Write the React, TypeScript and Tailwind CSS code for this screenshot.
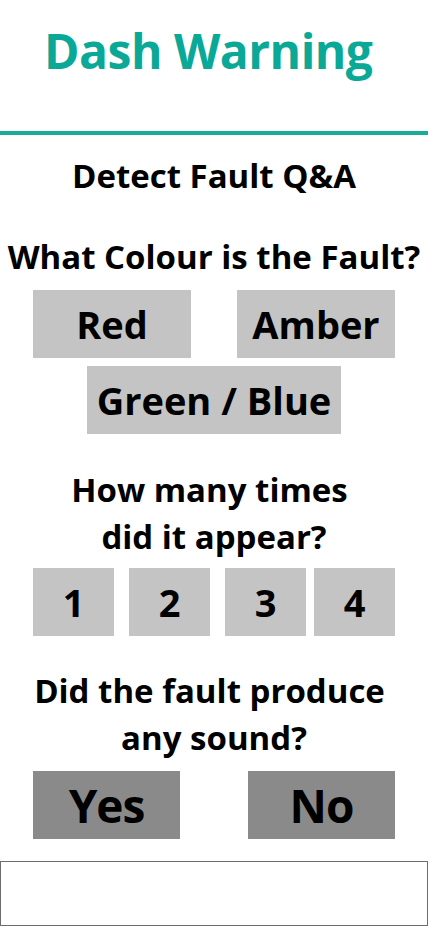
const font = { fontFamily: '"Open Sans", "Noto Sans", sans-serif' };

function Btn({ label, className }: { label: string; className: string }) {
  return (
    <div className={`flex items-center justify-center h-[68px] bg-[#c4c4c4] text-black font-bold text-[38px] leading-none ${className}`}>
      {label}
    </div>
  );
}

function Choice({ label }: { label: string }) {
  return (
    <div className="flex items-center justify-center w-[147px] h-[68px] bg-[#8a8a8a] text-black font-bold text-[46px] leading-none tracking-[-1px]">
      {label}
    </div>
  );
}

export default function App() {
  return (
    <div className="w-[428px] h-[926px] bg-white overflow-hidden" style={font}>
      <div className="h-[131px] pl-[44px] pt-[21px]">
        <h1 className="text-[#0aa896] font-bold text-[48px] leading-[60px] tracking-[-0.5px]">Dash Warning</h1>
      </div>
      <div className="h-[4px] bg-[#1aab99]" />

      <p className="mt-[21px] text-center font-bold text-[33px] leading-[40px]">Detect Fault Q&amp;A</p>
      <p className="mt-[41px] text-center font-bold text-[33px] leading-[40px] whitespace-nowrap">What Colour is the Fault?</p>

      <div className="mt-[13px] flex justify-between px-[33px]">
        <Btn label="Red" className="w-[158px]" />
        <Btn label="Amber" className="w-[158px]" />
      </div>
      <div className="mt-[8px] flex pl-[87px]">
        <Btn label="Green / Blue" className="w-[254px]" />
      </div>

      <div className="mt-[32px] text-center font-bold text-[33px] leading-[47px]">
        <p className="pr-[9px]">How many times</p>
        <p>did it appear?</p>
      </div>

      <div className="mt-[8px] flex pl-[33px] gap-[15px]">
        <Btn label="1" className="w-[81px]" />
        <Btn label="2" className="w-[81px]" />
        <Btn label="3" className="w-[81px]" />
        <Btn label="4" className="w-[81px] -ml-[7px]" />
      </div>

      <div className="mt-[31px] text-center font-bold text-[33px] leading-[47px]">
        <p className="pr-[9px]">Did the fault produce</p>
        <p>any sound?</p>
      </div>

      <div className="mt-[10px] flex justify-between px-[33px]">
        <Choice label="Yes" />
        <Choice label="No" />
      </div>

      <div className="mt-[22px] h-[65px] border border-[#6d6d6d]" />
    </div>
  );
}
